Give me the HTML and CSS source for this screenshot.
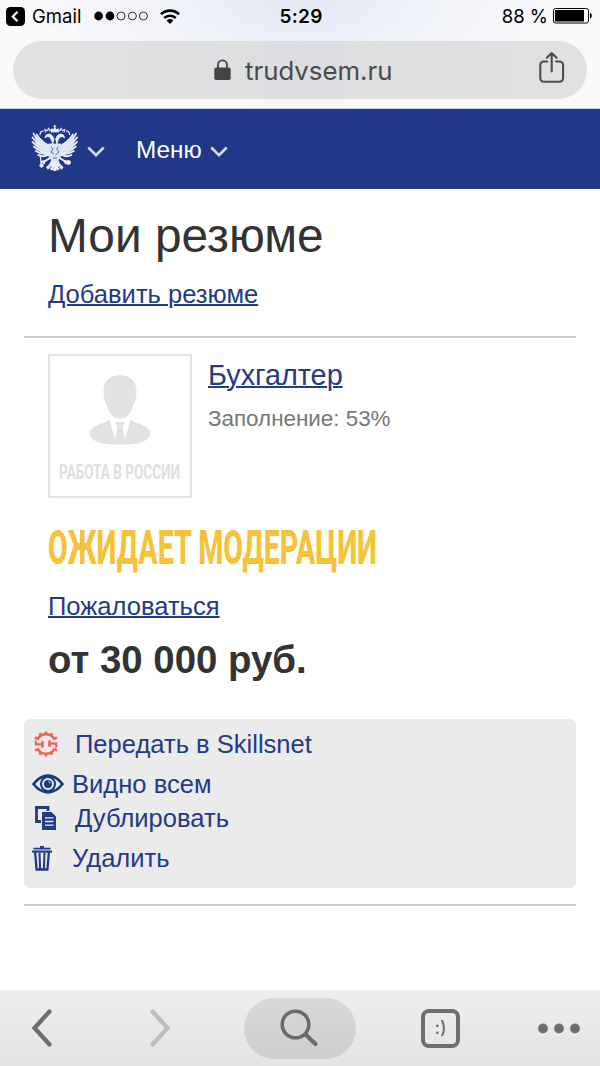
FILE: index.html
```
<!DOCTYPE html>
<html lang="ru">
<head>
    <meta charset="UTF-8">
    <meta name="viewport" content="width=device-width, initial-scale=1.0">
    <title>Мои резюме</title>
    <link rel="stylesheet" href="styles.css">
</head>
<body>
    <div class="browser-top">
        <div class="status-bar">
            <div class="status-left">
                <svg class="back-app" width="19" height="19" viewBox="0 0 19 19">
                    <rect width="19" height="19" rx="4.5" fill="#000"/>
                    <path d="M11.5 4.8L6.8 9.5l4.7 4.7" fill="none" stroke="#fff" stroke-width="2.2"/>
                </svg>
                <span class="app-name">Gmail</span>
                <svg class="signal" width="54" height="10" viewBox="0 0 54 10">
                    <circle cx="4.6" cy="5" r="4.4"/>
                    <circle cx="16" cy="5" r="4.4"/>
                    <g fill="none" stroke="#000" stroke-width="0.8">
                        <circle cx="27" cy="5" r="4"/>
                        <circle cx="38.4" cy="5" r="4"/>
                        <circle cx="49.4" cy="5" r="4"/>
                    </g>
                </svg>
                <svg class="wifi" width="20" height="15" viewBox="0 0 20 15">
                    <g fill="none" stroke="#000" stroke-width="2.6">
                        <path d="M1 5.2a13 13 0 0 1 18 0"/>
                        <path d="M4.2 9a8.4 8.4 0 0 1 11.6 0"/>
                    </g>
                    <path d="M10 15l-3.400-3.500a4.800 4.800 0 0 1 6.800 0z"/>
                </svg>
            </div>
            <div class="clock">5:29</div>
            <div class="status-right">
                <span>88 %</span>
                <svg width="40" height="16" viewBox="0 0 40 16">
                    <rect x="0.5" y="0.5" width="35" height="14.5" rx="2" fill="#fff" stroke="#000"/>
                    <rect x="2" y="2" width="29" height="11.5"/>
                    <path d="M37 5c2.4.4 2.4 5.1 0 5.5z"/>
                </svg>
            </div>
        </div>
        <div class="address-bar">
            <svg class="lock" width="17" height="22" viewBox="0 0 17 22">
                <rect x="0.3" y="8.6" width="16.4" height="12.4" rx="1.8" fill="#444446"/>
                <path d="M4 9V5.800a4.500 4.500 0 0 1 9 0V9" fill="none" stroke="#444446" stroke-width="1.8"/>
            </svg>
            <span class="domain">trudvsem.ru</span>
            <svg class="share" width="28" height="34" viewBox="0 0 28 34">
                <g fill="none" stroke="#4e4e50" stroke-width="2.1" stroke-linecap="round" stroke-linejoin="round">
                    <path d="M9.3 10.5H5.700A3.400 3.400 0 0 0 2.300 13.900v13.400a3.400 3.400 0 0 0 3.400 3.400h16a3.400 3.400 0 0 0 3.400-3.400V13.900a3.400 3.400 0 0 0-3.400-3.400h-3.600"/>
                    <path d="M13.700 20.500V2M8.800 6.800l4.900-4.900 4.900 4.900"/>
                </g>
            </svg>
        </div>
    </div>

    <header class="site-header">
        <svg class="emblem" width="48" height="48" viewBox="0 0 48 48">
            <defs>
                <g id="half">
                    <!-- wing feathers -->
                    <path d="M17 19Q9 16 5 10L4 17l2 6 4 5 7 2z" fill="#b9c6e8" stroke="none"/>
                    <g stroke-width="1.8" stroke-linecap="round">
                        <path d="M17 22Q6 17 2.500 8.500"/>
                        <path d="M17 24Q7 20 1.500 12.500"/>
                        <path d="M17 26Q8 23.500 1.600 17"/>
                        <path d="M17 28Q9 27 2.800 21.500"/>
                        <path d="M17 29Q11 30 4.800 26"/>
                        <path d="M17 30Q12 32.500 7.200 30"/>
                        <path d="M16 20Q9 15 5.600 9.500"/>
                    </g>
                    <!-- head and neck -->
                    <path d="M22 20q-1-5-3-8q-2.500-1.500-5 .8q.5-3.600 4-3.800q4 .5 5 6" fill="#e9effb"/>
                    <path d="M14.500 7.500l-.6-3 2.200 1.300 1.400-2.400 1.300 2.400 2-1.200-.5 3" stroke-width="1.100"/>
                    <path d="M9 10q0-4 3.500-4.200" stroke-width="1.200"/>
                    <!-- leg and tail -->
                    <path d="M19 33l-5 3-4 1M14 36l-1.500 3" stroke-width="2"/>
                    <path d="M22 35q-1.500 5-6 8.500M23 36l-2.500 9" stroke-width="3"/>
                </g>
            </defs>
            <g fill="none" stroke="#e9effb">
                <use href="#half"/>
                <use href="#half" transform="matrix(-1 0 0 1 47.600 0)"/>
                <path d="M17.500 19h12.600v11q-.8 4.500-6.300 6.500q-5.500-2-6.300-6.500z" fill="#dbe4f7" stroke-width="0.800"/>
                <path d="M23.800 0v3M22.400 1.300h2.800" stroke-width="1"/>
                <path d="M21 7l-.8-3.200 2 .8 1.600-2 1.600 2 2-.8L26.600 7z" fill="#e9effb" stroke-width="0.600"/>
                <path d="M23.800 36v10" stroke-width="3"/>
                <path d="M9 29.500l1.500 11" stroke-width="1.300"/>
                <circle cx="10.500" cy="40.500" r="1.700" fill="#e9effb"/>
                <circle cx="37.500" cy="37.500" r="2" fill="#e9effb"/>
            </g>
            <g fill="none" stroke="#203887" stroke-width="0.700">
                <path d="M20 22l2 2-2 3 3 2M27.500 22l-2 2 2.500 3-3.500 3M22 33h4M18.500 41l2 2M29 41l-2 2"/>
            </g>
        </svg>
        <svg class="chevron" width="18" height="11" viewBox="0 0 18 11">
            <path d="M1.300 1.500L9 9.200l7.700-7.700"/>
        </svg>
        <span class="menu-label">Меню</span>
        <svg class="chevron" width="18" height="11" viewBox="0 0 18 11">
            <path d="M1.300 1.500L9 9.200l7.700-7.700"/>
        </svg>
    </header>

    <main>
        <section class="title-block">
            <h1>Мои резюме</h1>
            <a class="link" href="#">Добавить резюме</a>
        </section>

        <section class="resume">
            <div class="resume-head">
                <svg class="photo" width="144" height="144" viewBox="0 0 144 144">
                    <rect x="1" y="1" width="142" height="142" fill="#fff" stroke="#e0e0e0" stroke-width="1.800"/>
                    <g fill="#e2e2e2">
                        <path d="M72 21c10 0 16.500 6.500 16.500 16 0 8-2.500 13-5.500 19.500-1.800 5-5.500 8-11 8s-9.200-3-11-8C58 50 55.500 45 55.500 37 55.500 27.500 62 21 72 21z"/>
                        <path d="M61 65.500L69 90.500C49 91 41.500 85 41.500 78.500 42.500 72.500 51 71 58 68z"/>
                        <path d="M83 65.500L75 90.500C95 91 102.500 85 102.500 78.500 101.500 72.500 93 71 86 68z"/>
                        <path d="M67.500 68h9l-2 5 3 15.500-5.500 2.500-5.500-2.500 3-15.500z"/>
                    </g>
                    <text class="photo-text" x="11" y="125" textLength="121" lengthAdjust="spacingAndGlyphs">РАБОТА В РОССИИ</text>
                </svg>
                <div class="resume-info">
                    <a class="resume-name" href="#">Бухгалтер</a>
                    <p class="filled">Заполнение: 53%</p>
                </div>
            </div>
            <svg class="status" width="340" height="60" viewBox="0 0 340 60">
                <text x="0" y="46" textLength="329" lengthAdjust="spacingAndGlyphs">ОЖИДАЕТ МОДЕРАЦИИ</text>
            </svg>
            <a class="link complain" href="#">Пожаловаться</a>
            <p class="salary">от 30 000 руб.</p>
        </section>

        <ul class="actions">
            <li class="action-skills">
                <svg width="26" height="26" viewBox="0 0 26 26">
                    <g fill="none" stroke="#ee6258">
                        <path d="M4.500 8.500A9.500 9.500 0 0 1 21.500 8.500M21.500 17.500A9.500 9.500 0 0 1 4.500 17.500" stroke-width="2.500"/>
                        <path d="M2.800 9.500v3.800h7.500M23.200 16.500v-3.800h-7.500" stroke-width="2.200"/>
                        <path d="M9.500 10.200v6.200M16.500 9.600v6.200" stroke-width="2.600"/>
                        <path d="M13 3.500V0.500M8.200 5L6.700 2.200M17.800 5l1.500-2.800M4.800 8L2 6.400M21.200 8l2.800-1.600M13 22.500v3M8.200 21l-1.500 2.800M17.800 21l1.500 2.800M4.800 18L2 19.600M21.200 18l2.800 1.600" stroke-width="2.500"/>
                    </g>
                </svg>
                <a href="#">Передать в Skillsnet</a>
            </li>
            <li class="action-eye">
                <svg width="32" height="20" viewBox="0 0 32 20">
                    <path d="M1.500 10Q8 1.600 16 1.600T30.500 10Q24 18.400 16 18.400T1.500 10z" fill="none" stroke="#15397f" stroke-width="2.600"/>
                    <circle cx="16" cy="10" r="7" fill="none" stroke="#15397f" stroke-width="2"/>
                    <circle cx="16" cy="10" r="4" fill="#15397f"/>
                    <path d="M16.300 7.500a2.500 2.500 0 0 1 2 2" fill="none" stroke="#ebebeb" stroke-width="1"/>
                </svg>
                <a href="#">Видно всем</a>
            </li>
            <li class="action-copy">
                <svg width="22" height="25" viewBox="0 0 22 25">
                    <path d="M6 15.500H1.500V1.500H13V5" fill="none" stroke="#253a85" stroke-width="2.800"/>
                    <path d="M7 6h9.500l4.500 4.500V24H7z" fill="#253a85"/>
                    <path d="M10 11.800h8.500M10 15.500h8.500M10 19.200h8.500" stroke="#ebebeb" stroke-width="1.300"/>
                </svg>
                <a href="#">Дублировать</a>
            </li>
            <li class="action-delete">
                <svg width="20" height="25" viewBox="0 0 20 25">
                    <g fill="none" stroke="#253a85">
                        <path d="M0 5.600h20" stroke-width="2.200"/>
                        <path d="M1.500 2.600h17" stroke-width="1.800"/>
                        <path d="M8 1h4" stroke-width="2"/>
                        <path d="M3 5l1.600 18.500h10.800L17 5" stroke-width="2.300"/>
                        <path d="M7.500 7l.6 16M12.500 7l-.6 16" stroke-width="2.100"/>
                    </g>
                </svg>
                <a href="#">Удалить</a>
            </li>
        </ul>
    </main>

    <footer class="toolbar">
        <svg width="22" height="40" viewBox="0 0 22 40">
            <path d="M18.500 3.500L3.500 20l15 16.500" fill="none" stroke="#6e6e6e" stroke-width="4.300" stroke-linecap="round"/>
        </svg>
        <svg width="22" height="40" viewBox="0 0 22 40">
            <path d="M3.500 3.500l15 16.500-15 16.500" fill="none" stroke="#bdbdbd" stroke-width="4.300" stroke-linecap="round"/>
        </svg>
        <div class="search">
            <svg width="40" height="40" viewBox="0 0 40 40">
                <circle cx="15.500" cy="16.500" r="13.300" fill="none" stroke="#6b6b6b" stroke-width="3.600"/>
                <path d="M25.500 26.500L35.500 36" stroke="#6b6b6b" stroke-width="4.200" stroke-linecap="round"/>
            </svg>
        </div>
        <div class="tabs">:)</div>
        <svg width="42" height="12" viewBox="0 0 42 12" fill="#6e6e6e">
            <circle cx="5" cy="6.500" r="4.900"/>
            <circle cx="21" cy="6.500" r="4.900"/>
            <circle cx="37" cy="6.500" r="4.900"/>
        </svg>
    </footer>
</body>
</html>
```
FILE: styles.css
```
* {
    box-sizing: border-box;
}

body {
    margin: 0;
    height: 1066px;
    display: flex;
    flex-direction: column;
    overflow: hidden;
    font-family: "Liberation Sans", Arial, sans-serif;
    background-color: #fff;
    color: #333;
}

svg {
    display: block;
    flex: none;
    overflow: visible;
}

a {
    color: #253a85;
    text-decoration: none;
}

h1, p, ul {
    margin: 0;
    padding: 0;
}

/* browser top */
.browser-top {
    height: 109px;
    background: radial-gradient(ellipse 260px 110px at 50% 0, #e5e9f5, #f2f4fa 60%, #f9f9fa);
    font-family: Inter, sans-serif;
    border-bottom: 1px solid #c5cfeb;
}

.status-bar {
    height: 32px;
    padding: 0 7px 0 6px;
    display: grid;
    grid-template-columns: 1fr auto 1fr;
    align-items: center;
    font-size: 18.5px;
    color: #000;
}

.status-left, .status-right {
    display: flex;
    align-items: center;
}

.app-name {
    margin: 0 13px 0 7px;
}

.wifi {
    margin-left: 12px;
}

.clock {
    font-weight: 600;
    font-size: 19px;
    letter-spacing: 0.3px;
    padding-left: 3px;
}

.status-right {
    justify-content: flex-end;
    gap: 5px;
}

.address-bar {
    height: 58px;
    margin: 9px 13px 0;
    padding: 0 21px 0 201px;
    display: flex;
    align-items: center;
    border-radius: 29px;
    background: linear-gradient(90deg, #e2e2e3, #dcdde0 50%, #e1e1e2);
}

.domain {
    margin-left: 14px;
    font-size: 25.8px;
    color: #4a4a4c;
}

.share {
    margin: -4px 0 0 auto;
}

/* site header */
.site-header {
    height: 80px;
    padding-left: 31px;
    display: flex;
    align-items: center;
    background-color: #203887;
    color: #fff;
}

.chevron {
    margin: 4px 0 0 8px;
    fill: none;
    stroke: #d5ddf2;
    stroke-width: 2.5;
}

.menu-label {
    margin: 1px 0 0 31px;
    font-size: 24.3px;
}

/* content */
main {
    flex: 1;
    padding: 0 24px;
}

.title-block {
    height: 149px;
    padding: 19px 24px 0;
    border-bottom: 2px solid #ccc;
}

h1 {
    font-size: 47.8px;
    font-weight: normal;
    line-height: 56px;
}

.link {
    display: block;
    width: max-content;
    margin-top: 15px;
    font-size: 25.55px;
    line-height: 30px;
    text-decoration: underline;
    text-decoration-thickness: 1.5px;
}

.resume {
    padding: 16px 24px 0;
}

.resume-head {
    display: flex;
    gap: 16px;
}

.photo-text {
    font: 700 21px Roboto, sans-serif;
    fill: #e0e0e0;
}

.resume-name {
    display: block;
    width: max-content;
    margin-top: 4px;
    font-size: 28.8px;
    line-height: 34px;
    text-decoration: underline;
    text-decoration-thickness: 1.8px;
}

.filled {
    margin-top: 14px;
    font-size: 22.4px;
    line-height: 26px;
    color: #777;
}

.status {
    margin-top: 20px;
    font: 800 48px Roboto, sans-serif;
    fill: #f5c33b;
}

.complain {
    margin-top: 13px;
}

.salary {
    margin-top: 17px;
    font-size: 38.4px;
    font-weight: bold;
    line-height: 44px;
}

.actions {
    height: 169px;
    margin-top: 37px;
    padding: 8px 8px 0;
    list-style: none;
    border-radius: 6px;
    background-color: #ebebeb;
}

.actions li {
    display: flex;
    align-items: center;
    height: 34px;
    font-size: 25.55px;
}

.action-skills {
    padding-left: 1px;
    gap: 16px;
}

.actions .action-eye {
    margin-top: 6px;
    gap: 8px;
}

.action-copy {
    padding-left: 3px;
    gap: 18px;
}

.actions .action-delete {
    margin-top: 6px;
    gap: 20px;
}

main::after {
    content: "";
    display: block;
    margin-top: 16px;
    border-bottom: 2px solid #ccc;
}

/* browser bottom */
.toolbar {
    height: 76px;
    padding: 0 20px 0 31px;
    display: flex;
    align-items: center;
    background: linear-gradient(#efefef, #e3e3e3);
}

.toolbar > svg + svg {
    margin-left: 96px;
}

.search {
    width: 112px;
    height: 61px;
    margin-left: 73px;
    display: flex;
    align-items: center;
    justify-content: center;
    border-radius: 31px;
    background: linear-gradient(#d8d8d8, #cecece);
}

.tabs {
    width: 39px;
    height: 39px;
    margin: 0 78px 0 65px;
    border: 4px solid #6e6e6e;
    border-radius: 8px;
    font: 500 18px/30px Inter, sans-serif;
    text-align: center;
    color: #6e6e6e;
}
```
